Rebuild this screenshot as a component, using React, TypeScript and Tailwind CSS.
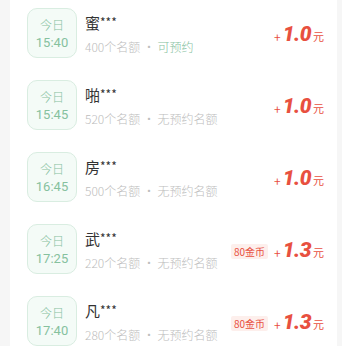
import * as React from 'react';

type Slot = {
    time: string;
    name: string;
    quota: number;
    bookable: boolean;
    amount: string;
    coins?: number;
};

const SLOTS: Slot[] = [
    { time: '15:40', name: '蜜', quota: 400, bookable: true, amount: '1.0' },
    { time: '15:45', name: '啪', quota: 520, bookable: false, amount: '1.0' },
    { time: '16:45', name: '房', quota: 500, bookable: false, amount: '1.0' },
    { time: '17:25', name: '武', quota: 220, bookable: false, amount: '1.3', coins: 80 },
    { time: '17:40', name: '凡', quota: 280, bookable: false, amount: '1.3', coins: 80 },
];

const CJK = "font-['Noto_Sans_CJK_SC','Noto_Sans',sans-serif]";

const TimeBadge: React.FC<{ time: string }> = ({ time }) => (
    <div className="w-[50px] h-[50px] shrink-0 rounded-[10px] border border-[#d9ede1] bg-[#f4fbf7] flex flex-col items-center justify-center text-[#86c19e]">
        <span className="text-[12px] leading-[18px] font-light">今日</span>
        <span className="text-[13px] leading-[17px] font-['Roboto',sans-serif]">{time}</span>
    </div>
);

const SlotRow: React.FC<{ slot: Slot }> = ({ slot }) => (
    <div className="h-[72px] flex items-start pt-[8px] pl-[17px] pr-[13px]">
        <TimeBadge time={slot.time} />
        <div className="ml-[8px] flex-grow pt-[4px]">
            <div className="text-[15px] leading-[22px] text-[#333]">
                {slot.name}<span className="text-[12px] align-top relative top-[-1px]">***</span>
            </div>
            <div className="mt-[4px] text-[12px] leading-[18px] text-[#bdbdbd] font-light">
                {slot.quota}个名额 · <span className={slot.bookable ? 'text-[#86c19e]' : ''}>{slot.bookable ? '可预约' : '无预约名额'}</span>
            </div>
        </div>
        <div className="mt-[14px] flex items-center text-[#e8503f]">
            {slot.coins && (
                <span className="mr-[6px] mt-[2px] px-[3px] h-[15px] leading-[15px] rounded-[2px] bg-[#fdefec] text-[10px]">{slot.coins}金币</span>
            )}
            <span className="text-[12px] mt-[5px] mr-[2px]">+</span>
            <span className="font-['Roboto',sans-serif] italic font-black text-[21px] leading-[24px] tracking-[-0.5px]">{slot.amount}</span>
            <span className="ml-[2px] text-[11px] mt-[4px]">元</span>
        </div>
    </div>
);

export default function App() {
    return (
        <div className={`w-[342px] h-[346px] overflow-hidden bg-[#f6f6f6] pl-[10px] pr-[5px] ${CJK}`}>
            <div className="bg-white h-full">
                {SLOTS.map((s) => (
                    <SlotRow key={s.time} slot={s} />
                ))}
            </div>
        </div>
    );
}
